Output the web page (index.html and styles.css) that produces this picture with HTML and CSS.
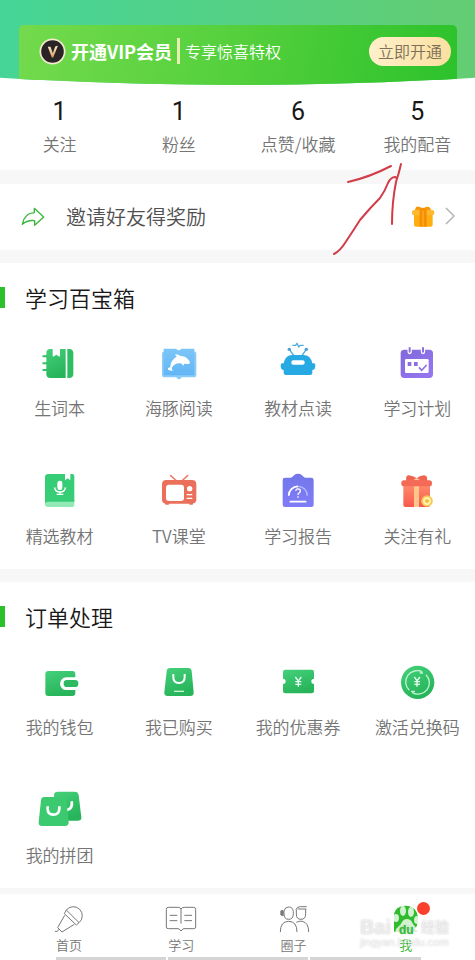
FILE: index.html
```html
<!DOCTYPE html>
<html lang="zh-CN">
<head>
<meta charset="utf-8">
<meta name="viewport" content="width=device-width, initial-scale=1">
<title>我的</title>
<link rel="stylesheet" href="styles.css">
</head>
<body>
<svg class="defs" aria-hidden="true">
  <defs>
    <linearGradient id="green" x1="0" y1="0" x2="0.4" y2="1"><stop offset="0" stop-color="#45d07a"/><stop offset="1" stop-color="#27b45a"/></linearGradient>
    <linearGradient id="blue" x1="0" y1="0" x2="0" y2="1"><stop offset="0" stop-color="#7cc6f8"/><stop offset="1" stop-color="#62b5f5"/></linearGradient>
    <linearGradient id="violet" x1="0" y1="0" x2="0" y2="1"><stop offset="0" stop-color="#7377e8"/><stop offset="1" stop-color="#7f7cf8"/></linearGradient>
    <linearGradient id="purple" x1="0" y1="0" x2="1" y2="1"><stop offset="0" stop-color="#8168dc"/><stop offset="1" stop-color="#9878f0"/></linearGradient>
    <linearGradient id="red" x1="0" y1="0" x2="0" y2="1"><stop offset="0" stop-color="#ff8a6c"/><stop offset="1" stop-color="#f7594c"/></linearGradient>
    <linearGradient id="gold" x1="0" y1="0" x2="0" y2="1"><stop offset="0" stop-color="#fff0d0"/><stop offset="1" stop-color="#d99a5c"/></linearGradient>
  </defs>
</svg>

<main class="page">
  <header class="hero">
    <div class="vip">
      <svg class="vip-badge" viewBox="118 112 80 80" aria-hidden="true">
        <circle cx="158" cy="152" r="36" fill="#2b2426" stroke="#f6e9d2" stroke-width="5"/>
        <path d="M144 138h8l7 19 7-20 8-2-14 35h-4z" fill="url(#gold)"/>
      </svg>
      <strong class="vip-title">开通VIP会员</strong>
      <span class="vip-sub">专享惊喜特权</span>
      <button class="vip-button" type="button">立即开通</button>
    </div>
  </header>

  <section class="stats">
    <a class="stat" href="#"><b>1</b><span>关注</span></a>
    <a class="stat" href="#"><b>1</b><span>粉丝</span></a>
    <a class="stat" href="#"><b>6</b><span>点赞/收藏</span></a>
    <a class="stat" href="#"><b>5</b><span>我的配音</span></a>
  </section>

  <a class="invite" href="#">
    <svg class="share" viewBox="63 78 72 63" aria-hidden="true"><path d="M67 133C71 111 82 99 103 98V85L131 111 104 136V122C88 120 77 124 67 133Z" fill="none" stroke="#39b83c" stroke-width="4" stroke-linejoin="round"/></svg>
    <span class="invite-text">邀请好友得奖励</span>
    <svg class="gift" viewBox="275 162 72 69" aria-hidden="true">
      <path d="M284 190h56v31q0 6-6 6h-44q-6 0-6-6z" fill="#ffae12"/>
      <rect x="278" y="177" width="67" height="16" rx="7" fill="#ffb82f"/>
      <path d="M287 177q2-12 11-10 10 1 13 11 3-10 12-11 10-1 12 10z" fill="#f59a0c"/>
      <path d="M311 170q9 1 11 9v48h-21v-48q1-8 10-9z" fill="#f68e05"/><path d="M311 178v49" stroke="#ffb62c" stroke-width="3"/>
    </svg>
    <svg class="chevron" viewBox="0 0 12 20" aria-hidden="true"><path d="M2 2l8 8-8 8" fill="none" stroke="#b4b4b4" stroke-width="1.500"/></svg>
  </a>

  <section class="panel">
    <h2>学习百宝箱</h2>
    <div class="tiles">
      <a class="tile" href="#">
        <svg viewBox="107 27 144 144" aria-hidden="true">
          <path d="M150 57h7v20q0 4 4 2l7-5 7 5q4 2 4-2V57h17v87h-46q-12 0-12-12V69q0-12 12-12z" fill="url(#green)"/>
          <path d="M201 57h5q13 0 13 13v61q0 13-13 13h-5z" fill="#2dbd62"/>
          <path d="M129 79h11M129 100h11M129 120h11" stroke="#2fc266" stroke-width="6" stroke-linecap="round"/>
        </svg>
        <span>生词本</span>
      </a>
      <a class="tile" href="#">
        <svg viewBox="464 27 144 144" aria-hidden="true">
          <path d="M493 64h87q8 0 8 8v62q0 8-8 8h-36q-3 6-8 6t-8-6h-35q-8 0-8-8V72q0-8 8-8z" fill="#8acbf8"/>
          <path d="M490 56h38q5 0 8 5 3-5 8-5h38v80h-92z" fill="url(#blue)"/>
          <path d="M528 56q5 9 16 0" fill="#fff"/>
          <path d="M506 121q-5-1-3-7l7-2q0-16 11-26 4-4 8-5l-5-8q12 0 17 5 18-1 28 18l-2 6-15-1-3 6-7-7q-20-2-28 14l3 9z" fill="#fff"/>
        </svg>
        <span>海豚阅读</span>
      </a>
      <a class="tile" href="#">
        <svg viewBox="117 27 144 144" aria-hidden="true">
          <path d="M163 58l14 20M214 58l-14 20M172 46h10l4-6 5 11 4-5h11" fill="none" stroke="#50aede" stroke-width="4" stroke-linejoin="round"/>
          <circle cx="163" cy="58" r="5" fill="#489ed9"/><circle cx="214" cy="58" r="5" fill="#489ed9"/>
          <path d="M172 75h33q22 0 27 25h4q6 0 5 7l-1 7q-1 6-8 6v9q0 6-7 6h-72q-7 0-7-6v-9q-7 0-8-6l-1-7q-1-7 5-7h4q5-25 26-25z" fill="#27aae3"/>
          <rect x="169" y="91" width="40" height="13" rx="6" fill="#fff"/>
        </svg>
        <span>教材点读</span>
      </a>
      <a class="tile" href="#">
        <svg viewBox="475 27 144 144" aria-hidden="true">
          <rect x="498" y="59" width="97" height="85" rx="11" fill="url(#purple)"/>
          <path d="M525 56v10M565 56v10" stroke="#fff" stroke-width="13" stroke-linecap="round"/>
          <path d="M525 54v11M565 54v11" stroke="#8870df" stroke-width="6" stroke-linecap="round"/>
          <rect x="511" y="87" width="71" height="42" rx="4" fill="#fff"/>
          <path d="M519 96h11v12h-11zM538 96h11v12h-11z" fill="#8a6ee2"/>
          <path d="M553 112l8 9 15-16" fill="none" stroke="#8e72e7" stroke-width="5"/>
        </svg>
        <span>学习计划</span>
      </a>
      <a class="tile" href="#">
        <svg viewBox="107 21 144 144" aria-hidden="true">
          <path d="M143 119h79v16q0 6-6 6h-73q-9 0-9-9v-5z" fill="#91e9b5"/>
          <path d="M144 42h50v19l8-6 8 6V42h6q6 0 6 6v77h-80q-6 0-8 5V51q0-9 10-9z" fill="#37cd76"/>
          <rect x="171" y="62" width="15" height="28" rx="7" fill="#fff"/>
          <path d="M163 82q1 14 16 14t16-14M179 96v7M169 103h20" fill="none" stroke="#fff" stroke-width="4"/>
        </svg>
        <span>精选教材</span>
      </a>
      <a class="tile" href="#">
        <svg viewBox="464 21 144 144" aria-hidden="true">
          <path d="M511 47l18 16M562 47l-18 16" stroke="#eb8068" stroke-width="5" stroke-linecap="round"/>
          <path d="M498 60h77q13 0 13 13v45q0 11-9 12l-2 4h-9l-2-3h-59l-2 3h-9l-3-4q-8-1-8-12V73q0-13 13-13z" fill="#ea705b"/>
          <rect x="497" y="74" width="54" height="49" rx="9" fill="#fff"/><circle cx="568" cy="86" r="8" fill="#fff"/><path d="M559 104h17M559 115h17" stroke="#fff" stroke-width="4"/>
        </svg>
        <span>TV课堂</span>
      </a>
      <a class="tile" href="#">
        <svg viewBox="117 21 144 144" aria-hidden="true">
          <path d="M150 53h17q4 0 7-4l4-4q4-4 11-4t11 4l4 4q3 4 7 4h18q7 0 7 7v74q0 7-7 7h-79q-7 0-7-7V60q0-7 7-7z" fill="url(#violet)"/>
          <path d="M161 107a28 28 0 1 1 56 0" fill="none" stroke="#b9bbff" stroke-width="4"/><path d="M161 107a28 28 0 0 1 28-28" fill="none" stroke="#fff" stroke-width="5"/>
          <path d="M182 92q2-6 8-5 6 0 6 6 0 4-4 6-3 2-3 6M189 109v4" fill="none" stroke="#fff" stroke-width="4"/>
          <path d="M166 125h46" stroke="#fff" stroke-width="5" stroke-linecap="round"/>
        </svg>
        <span>学习报告</span>
      </a>
      <a class="tile" href="#">
        <svg viewBox="475 21 144 144" aria-hidden="true">
          <path d="M515 63q-3-17 7-17 14 1 24 9 8-8 22-9 12 1 9 17z" fill="#f0644f"/><path d="M535 61l11-7 12 7" fill="#ffc3a5"/>
          <path d="M506 75h80v60q0 6-6 6h-68q-6 0-6-6z" fill="url(#red)"/>
          <path d="M538 75h15v66h-15z" fill="#ffc58b"/>
          <rect x="500" y="61" width="92" height="18" rx="8" fill="#f36b57"/>
          <circle cx="577" cy="123" r="15" fill="#fff0a4" stroke="#f6c653" stroke-width="5"/><path d="M571 123h12M577 117v12" stroke="#f1b73f" stroke-width="4"/>
        </svg>
        <span>关注有礼</span>
      </a>
    </div>
  </section>

  <section class="panel orders">
    <h2>订单处理</h2>
    <div class="tiles">
      <a class="tile" href="#">
        <svg viewBox="107 27 144 144" aria-hidden="true">
          <path d="M144 66h72q9 0 9 9v10h-27a18 18 0 0 0 0 38h27v9q0 9-9 9h-72q-9 0-9-9V75q0-9 9-9z" fill="url(#green)"/><rect x="190" y="93" width="44" height="21" rx="10" fill="#2db962"/>
        </svg>
        <span>我的钱包</span>
      </a>
      <a class="tile" href="#">
        <svg viewBox="464 27 144 144" aria-hidden="true">
          <path d="M509 57h54q10 0 11 10l6 63q1 11-10 11h-68q-11 0-10-11l7-63q1-10 10-10z" fill="url(#green)"/>
          <path d="M519 75v10q0 17 17 17t17-17V75" fill="none" stroke="#fff" stroke-width="6"/><path d="M521 127h30" stroke="#c9f5d8" stroke-width="4"/>
        </svg>
        <span>我已购买</span>
      </a>
      <a class="tile" href="#">
        <svg viewBox="117 27 144 144" aria-hidden="true">
          <path d="M151 62h79q7 0 7 7v20a8 8 0 0 0 0 16v21q0 7-7 7h-79q-7 0-7-7v-21a8 8 0 0 0 0-16V69q0-7 7-7z" fill="url(#green)"/>
          <path d="M181 84l9 12 9-12M190 96v17M181 98h18M181 106h18" fill="none" stroke="#e8ffef" stroke-width="4"/>
        </svg>
        <span>我的优惠券</span>
      </a>
      <a class="tile" href="#">
        <svg viewBox="475 27 144 144" aria-hidden="true">
          <circle cx="549" cy="100" r="50" fill="url(#green)"/>
          <path d="M524 124a34 34 0 0 1 39-55l-9-5M574 77a34 34 0 0 1-42 53l9 5M555 72h10M541 127h-12" fill="none" stroke="#bdf4cf" stroke-width="4"/>
          <path d="M539 84l8 11 9-11M547 95v18M539 98h17M539 106h17" fill="none" stroke="#e5ffed" stroke-width="4"/>
        </svg>
        <span>激活兑换码</span>
      </a>
      <a class="tile" href="#">
        <svg viewBox="107 21 144 144" aria-hidden="true">
          <path d="M173 38h50q10 0 12 10l8 67q1 10-9 10h-57q-10 0-12-10l-4-67q0-10 12-10z" fill="url(#green)"/>
          <path d="M132 54h56q10 0 11 10l6 66q0 11-11 11h-69q-11 0-10-11l7-66q1-10 10-10z" fill="#3bca6f"/>
          <path d="M142 82v8q0 17 17 17t18-17v-8M214 67q4 21-13 26" fill="none" stroke="#fff" stroke-width="8"/>
        </svg>
        <span>我的拼团</span>
      </a>
    </div>
  </section>

  <nav class="tabs">
    <a class="tab" href="#">
      <svg viewBox="153 360 108 108" aria-hidden="true"><g fill="none" stroke="#777" stroke-width="3" stroke-linejoin="round"><path d="M199 390a27 27 0 1 1 38 38zM199 390l-6 11 36 34 8-7M194 406l-21 37 13 13 37-23M177 448l-5 6h-7"/></g></svg>
      <span>首页</span>
    </a>
    <a class="tab" href="#">
      <svg viewBox="492 360 108 108" aria-hidden="true"><g fill="none" stroke="#777" stroke-width="3" stroke-linejoin="round"><path d="M546 387q-2-5-8-5h-30q-6 0-6 6v53q0 5 6 5h29q4 0 6 4l3 3 3-3q2-4 6-4h29q6 0 6-5v-53q0-6-6-6h-28q-7 0-10 5v44"/><path d="M512 406h23M512 422h23M556 406h23M556 422h23"/></g></svg>
      <span>学习</span>
    </a>
    <a class="tab" href="#">
      <svg viewBox="123 90 108 108" aria-hidden="true"><g fill="none" stroke="#777" stroke-width="3"><path d="M147 123q2-12 14-12t14 13v7q0 17-14 17t-14-17zM184 119v13q0 16 14 16t14-16v-15M183 119q2-9 13-9h19M188 117h26M136 186q0-32 25-32t25 32M184 157q9-5 18-3 19 4 19 32"/></g><path d="M136 123q5-6 10 0v15q-9 0-10-4z" fill="#777"/></svg>
      <span>圈子</span>
    </a>
    <a class="tab active" href="#">
      <svg viewBox="462 90 108 108" aria-hidden="true"><path d="M480 185v-54q5-23 34-24 37 2 38 39-1 25-10 30l10 9h-23l-8-12-8 12z" fill="#2fbd2e"/></svg>
      <i class="dot"></i>
      <span>我</span>
    </a>
    <div class="watermark" aria-hidden="true">
      <div class="brand"><span>Bai</span><svg viewBox="0 0 30 32"><g fill="#fff" fill-opacity=".78"><ellipse cx="5" cy="13" rx="3" ry="4"/><ellipse cx="12" cy="6" rx="3" ry="5"/><ellipse cx="20" cy="7" rx="3" ry="5"/><ellipse cx="26" cy="15" rx="3" ry="4"/><path d="M16 14q4 0 6 5l5 6q1 6-5 6H9q-6-1-4-7l5-5q2-5 6-5z"/></g><text x="8" y="29">du</text></svg><span>经验</span></div>
      <small>jingyan.baidu.com</small>
    </div>
    <div class="lines"><i></i><i></i><i></i></div>
  </nav>

  <svg class="arrow" viewBox="0 0 95 105" aria-hidden="true"><g fill="none" stroke="#d23c48" stroke-width="2" stroke-linecap="round" stroke-linejoin="round"><path d="M15 22q22-5 43-16"/><path d="M1 94q6-3 11-11 8-12 15-23 10-12 20-22 5-7 8-15 3-6 7-6l2 1"/><path d="M68 4q-2 9-5 18-4 20-4 42"/></g></svg>
</main>
</body>
</html>
```

FILE: styles.css
```css
* {
  box-sizing: border-box;
}

body {
  margin: 0;
  background: #f7f7f7;
  color: #757575;
  font-family: "Noto Sans CJK SC", sans-serif;
  font-weight: 350;
}

a {
  color: inherit;
  text-decoration: none;
}

svg {
  display: block;
}

.defs {
  position: absolute;
  width: 0;
  height: 0;
}

.page {
  position: relative;
  overflow: hidden;
}

.hero {
  position: relative;
  z-index: 1;
  padding: 25px 18px 0 19px;
  background: linear-gradient(90deg, #46d597, #64cd73);
  clip-path: circle(3850px at 50% -3765px);
}

.vip {
  display: flex;
  align-items: center;
  height: 60px;
  padding: 0 6px 8px 20px;
  border-radius: 5px 5px 0 0;
  background: linear-gradient(100deg, #73da4c, #54d03c 50%, #2cc22c);
  color: #fff;
}

.vip-badge {
  width: 27px;
  height: 27px;
}

.vip-title {
  margin-left: 5px;
  padding-right: 5px;
  border-right: 3px solid #e8eeb0;
  font-size: 18px;
  font-weight: 700;
  line-height: 26px;
}

.vip-sub {
  margin-left: 5px;
  font-size: 16px;
}

.vip-button {
  height: 29px;
  margin-left: auto;
  padding: 0 9px;
  border: 0;
  border-radius: 15px;
  background: linear-gradient(100deg, #fff0cc, #fbdf9f);
  color: #7d7058;
  font: inherit;
  font-size: 16px;
  line-height: 29px;
}

.stats {
  display: grid;
  grid-template-columns: repeat(4, 1fr);
  margin: -8px -2px 0 0;
  padding: 20px 0 14px;
  background: #fff;
}

.stat {
  display: grid;
  justify-items: center;
  font-size: 17px;
  line-height: 24px;
}

.stat b {
  margin-bottom: 5px;
  color: #181818;
  font: 400 25px/30px Roboto, sans-serif;
}

.invite {
  display: flex;
  align-items: center;
  height: 66px;
  margin: 14px 0 13px;
  padding: 0 19px 2px 21px;
  background: #fff;
  color: #505050;
  font-size: 20px;
}

.share {
  width: 24px;
  height: 21px;
}

.invite-text {
  margin-left: 21px;
}

.gift {
  width: 24px;
  height: 23px;
  margin-left: auto;
}

.chevron {
  width: 12px;
  height: 20px;
  margin-left: 9px;
}

.panel {
  overflow: hidden;
  padding-bottom: 10px;
  background: #fff;
}

h2 {
  display: flex;
  align-items: center;
  gap: 20px;
  height: 68px;
  margin: 0;
  color: #181818;
  font-size: 22px;
  font-weight: 350;
}

h2::before {
  width: 5px;
  height: 21px;
  background: #2dc02d;
  content: "";
}

.tiles {
  display: grid;
  grid-template-columns: repeat(4, 1fr);
  row-gap: 36px;
  margin: 8px -2px 0 0;
}

.tile {
  display: grid;
  justify-items: center;
  align-content: start;
  gap: 8px;
  height: 92px;
  font-size: 17px;
  line-height: 26px;
}

.tile svg {
  width: 48px;
  height: 48px;
}

.orders {
  margin-top: 13px;
}

.tabs {
  position: relative;
  display: grid;
  grid-template-columns: repeat(4, 1fr);
  height: 66px;
  margin-top: 6px;
  padding: 6px 13px 0;
  background: #fff;
}

.tab {
  position: relative;
  display: flex;
  flex-direction: column;
  align-items: center;
  font-size: 13px;
  line-height: 18px;
}

.tab svg {
  width: 36px;
  height: 36px;
}

.active {
  color: #2fbd2e;
}

.dot {
  position: absolute;
  top: 2px;
  left: 50%;
  width: 13px;
  height: 13px;
  margin-left: 11px;
  border-radius: 50%;
  background: #fb3f2d;
}

.watermark {
  position: absolute;
  top: 17px;
  right: 26px;
  color: rgb(255 255 255 / 60%);
  font-family: "Liberation Sans", "Noto Sans CJK SC", sans-serif;
  text-shadow: 0 0 2px rgb(0 0 0 / 22%);
}

.brand {
  display: flex;
  align-items: center;
  font-size: 20px;
  font-weight: 700;
  line-height: 32px;
}

.brand span:last-child {
  font-size: 14px;
}

.brand svg {
  width: 30px;
  height: 32px;
  margin-top: -12px;
}

.brand text {
  fill: #2fbd2e;
  font-size: 12px;
}

.watermark small {
  display: block;
  margin-top: -8px;
  font-size: 11px;
  line-height: 14px;
}

.lines {
  position: absolute;
  right: 54px;
  bottom: 0;
  left: 56px;
  display: grid;
  grid-template-columns: 110fr 141fr 111fr;
  gap: 2px;
}

.lines i {
  height: 3px;
  background: #d5d5d5;
}

.arrow {
  position: absolute;
  top: 160px;
  right: 47px;
  z-index: 2;
  width: 95px;
  height: 105px;
}
```
